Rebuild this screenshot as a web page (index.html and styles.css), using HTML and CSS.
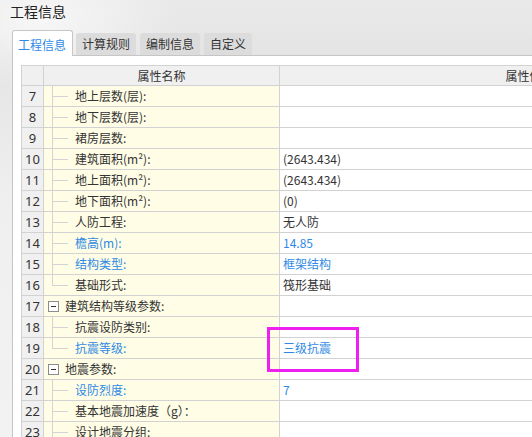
FILE: index.html
```html
<!DOCTYPE html>
<html lang="zh">
<head>
<meta charset="utf-8">
<title>工程信息</title>
<link rel="stylesheet" href="styles.css">
</head>
<body>
<div class="app">
  <div class="title">工程信息</div>
  <div class="tabs">
    <div class="tab active">工程信息</div>
    <div class="tab">计算规则</div>
    <div class="tab">编制信息</div>
    <div class="tab">自定义</div>
  </div>
  <div class="panel">
    <div class="grid">
      <div class="row head">
        <div class="hnum"></div>
        <div class="hname">属性名称</div>
        <div class="hval">属性值</div>
      </div>
      <div class="row"><div class="num">7</div><div class="name"><span class="tree"></span><span class="label">地上层数(层):</span></div><div class="val"></div></div>
      <div class="row"><div class="num">8</div><div class="name"><span class="tree"></span><span class="label">地下层数(层):</span></div><div class="val"></div></div>
      <div class="row"><div class="num">9</div><div class="name"><span class="tree"></span><span class="label">裙房层数:</span></div><div class="val"></div></div>
      <div class="row"><div class="num">10</div><div class="name"><span class="tree"></span><span class="label">建筑面积(m²):</span></div><div class="val">(2643.434)</div></div>
      <div class="row"><div class="num">11</div><div class="name"><span class="tree"></span><span class="label">地上面积(m²):</span></div><div class="val">(2643.434)</div></div>
      <div class="row"><div class="num">12</div><div class="name"><span class="tree"></span><span class="label">地下面积(m²):</span></div><div class="val">(0)</div></div>
      <div class="row"><div class="num">13</div><div class="name"><span class="tree"></span><span class="label">人防工程:</span></div><div class="val">无人防</div></div>
      <div class="row"><div class="num">14</div><div class="name"><span class="tree"></span><span class="label blue">檐高(m):</span></div><div class="val blue">14.85</div></div>
      <div class="row"><div class="num">15</div><div class="name"><span class="tree"></span><span class="label blue">结构类型:</span></div><div class="val blue">框架结构</div></div>
      <div class="row"><div class="num">16</div><div class="name"><span class="tree last"></span><span class="label">基础形式:</span></div><div class="val">筏形基础</div></div>
      <div class="row"><div class="num">17</div><div class="name group"><svg class="toggle" width="11" height="11" viewBox="0 0 11 11"><rect x="0.5" y="0.5" width="10" height="10" fill="#fff" stroke="#8c8c8c"/><line x1="3" y1="5.5" x2="8" y2="5.5" stroke="#333"/></svg><span class="label">建筑结构等级参数:</span></div><div class="val"></div></div>
      <div class="row"><div class="num">18</div><div class="name"><span class="tree"></span><span class="label">抗震设防类别:</span></div><div class="val"></div></div>
      <div class="row"><div class="num">19</div><div class="name"><span class="tree last"></span><span class="label blue">抗震等级:</span></div><div class="val blue">三级抗震</div></div>
      <div class="row"><div class="num">20</div><div class="name group"><svg class="toggle" width="11" height="11" viewBox="0 0 11 11"><rect x="0.5" y="0.5" width="10" height="10" fill="#fff" stroke="#8c8c8c"/><line x1="3" y1="5.5" x2="8" y2="5.5" stroke="#333"/></svg><span class="label">地震参数:</span></div><div class="val"></div></div>
      <div class="row"><div class="num">21</div><div class="name"><span class="tree"></span><span class="label blue">设防烈度:</span></div><div class="val blue">7</div></div>
      <div class="row"><div class="num">22</div><div class="name"><span class="tree"></span><span class="label">基本地震加速度（g）：</span></div><div class="val"></div></div>
      <div class="row"><div class="num">23</div><div class="name"><span class="tree"></span><span class="label">设计地震分组:</span></div><div class="val"></div></div>
    </div>
  </div>
  <div class="highlight"></div>
</div>
</body>
</html>
```

FILE: styles.css
```css
html, body {
  margin: 0;
  padding: 0;
}
body {
  font-family: "Noto Sans CJK SC", "Noto Sans", sans-serif;
  color: #333;
  background: #fff;
}
.app {
  position: relative;
  width: 532px;
  height: 437px;
  overflow: hidden;
  background:
    radial-gradient(ellipse 140px 70px at 40px 20px, #f7f7f7, rgba(247,247,247,0)),
    linear-gradient(to bottom, #e9e9e9 0, #e4e4e4 55px, #efefef 200px, #f2f2f2 437px);
}
.title {
  height: 24px;
  padding: 0 0 0 10px;
  font-size: 14px;
  line-height: 22px;
  color: #222;
}
.tabs {
  display: flex;
  align-items: flex-end;
  gap: 4px;
  height: 31px;
  margin-left: 12px;
  position: relative;
  z-index: 1;
}
.tab {
  height: 22px;
  padding: 0 6px;
  font-size: 12px;
  line-height: 21px;
  background: #dcdcdc;
  border-radius: 3px 3px 0 0;
  color: #333;
}
.tab.active {
  box-sizing: border-box;
  height: 26px;
  width: 61px;
  line-height: 27px;
  padding: 0 5px;
  margin-bottom: -1px;
  margin-right: -1px;
  background: #fff;
  color: #2f8ae5;
  border: 1px solid #c6c6c6;
  border-bottom: none;
}
.panel {
  background: #fff;
  border-top: 1px solid #c6c6c6;
  border-left: 1px solid #c6c6c6;
  margin-left: 12px;
  padding: 9px 0 0 8px;
  height: 400px;
}
.grid {
  border-top: 1px solid #d2d2d2;
  border-left: 1px solid #d2d2d2;
  width: 746px;
}
.row {
  display: grid;
  grid-template-columns: 22px 236px 488px;
  height: 21px;
}
.row > div {
  border-right: 1px solid #d2d2d2;
  border-bottom: 1px solid #d2d2d2;
  box-sizing: border-box;
  font-size: 12px;
  line-height: 20px;
  white-space: nowrap;
  overflow: hidden;
}
.row.head {
  height: 20px;
}
.row.head > div {
  background: #f0f0f0;
  text-align: center;
  line-height: 19px;
}
.num {
  background: #f0f0f0;
  text-align: center;
  font-family: "Noto Sans", sans-serif;
  font-size: 13px !important;
}
.name {
  background: #fffde6;
  display: flex;
  align-items: stretch;
}
.val {
  background: #fff;
  padding-left: 3px;
}
.tree {
  flex: none;
  width: 24px;
  margin-right: 7px;
  background:
    linear-gradient(#d4d4d4, #d4d4d4) no-repeat 8px 0 / 1px 100%,
    linear-gradient(#d4d4d4, #d4d4d4) no-repeat 8px 10px / 16px 1px;
}
.tree.last {
  background:
    linear-gradient(#d4d4d4, #d4d4d4) no-repeat 8px 0 / 1px 11px,
    linear-gradient(#d4d4d4, #d4d4d4) no-repeat 8px 10px / 16px 1px;
}
.group {
  align-items: center;
}
.toggle {
  flex: none;
  margin: 0 6px 0 4px;
  display: block;
}
.blue {
  color: #2f8ae5;
}
.highlight {
  position: absolute;
  left: 267px;
  top: 327px;
  width: 92px;
  height: 45px;
  box-sizing: border-box;
  border: 3px solid #ef1fef;
}
```
